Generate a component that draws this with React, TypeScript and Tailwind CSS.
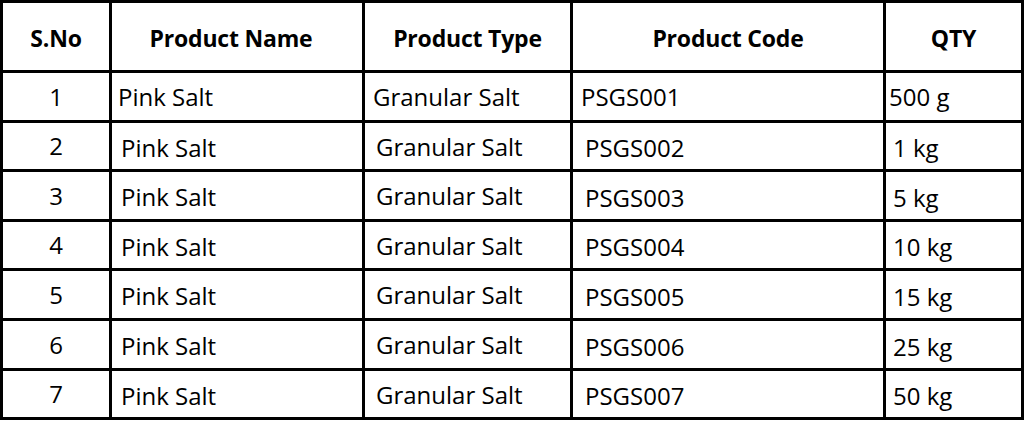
import React from "react";

type Row = {
  no: number;
  name: string;
  type: string;
  code: string;
  qty: string;
  h: string;
};

const rows: Row[] = [
  { no: 1, name: "Pink Salt", type: "Granular Salt", code: "PSGS001", qty: "500 g", h: "h-[50px]" },
  { no: 2, name: "Pink Salt", type: "Granular Salt", code: "PSGS002", qty: "1 kg", h: "h-[49px]" },
  { no: 3, name: "Pink Salt", type: "Granular Salt", code: "PSGS003", qty: "5 kg", h: "h-[50px]" },
  { no: 4, name: "Pink Salt", type: "Granular Salt", code: "PSGS004", qty: "10 kg", h: "h-[49px]" },
  { no: 5, name: "Pink Salt", type: "Granular Salt", code: "PSGS005", qty: "15 kg", h: "h-[50px]" },
  { no: 6, name: "Pink Salt", type: "Granular Salt", code: "PSGS006", qty: "25 kg", h: "h-[50px]" },
  { no: 7, name: "Pink Salt", type: "Granular Salt", code: "PSGS007", qty: "50 kg", h: "h-[49px]" },
];

const cell = "border-[3px] border-black p-0 align-middle";

export default function App() {
  return (
    <div className="w-[1024px] h-[421px] bg-white text-black font-['Open_Sans',sans-serif]">
      <table className="w-[1024px] table-fixed border-collapse">
        <colgroup>
          <col className="w-[109px]" />
          <col className="w-[253px]" />
          <col className="w-[208px]" />
          <col className="w-[313px]" />
          <col className="w-[138px]" />
        </colgroup>
        <thead>
          <tr className="h-[70px] text-[23px] font-bold tracking-[-0.2px]">
            <th className={`${cell} text-center pt-1`}>S.No</th>
            <th className={`${cell} text-center pt-1 pr-3`}>Product Name</th>
            <th className={`${cell} text-center pt-1`}>Product Type</th>
            <th className={`${cell} text-center pt-1`}>Product Code</th>
            <th className={`${cell} text-center pt-1`}>QTY</th>
          </tr>
        </thead>
        <tbody className="text-[24px]">
          {rows.map((r) => {
            const first = r.no === 1;
            return (
              <tr key={r.no} className={r.h}>
                <td className={`${cell} text-center`}>{r.no}</td>
                <td className={`${cell} ${first ? "pl-[6px]" : "pl-[9px] pt-[3px]"}`}>{r.name}</td>
                <td className={`${cell} ${first ? "pl-[8px]" : "pl-[11px] pt-[1px]"}`}>{r.type}</td>
                <td className={`${cell} ${first ? "pl-[8px]" : "pl-[12px] pt-[4px]"}`}>{r.code}</td>
                <td className={`${cell} ${first ? "pl-[3px]" : "pl-[7px] pt-[4px]"}`}>{r.qty}</td>
              </tr>
            );
          })}
        </tbody>
      </table>
    </div>
  );
}
